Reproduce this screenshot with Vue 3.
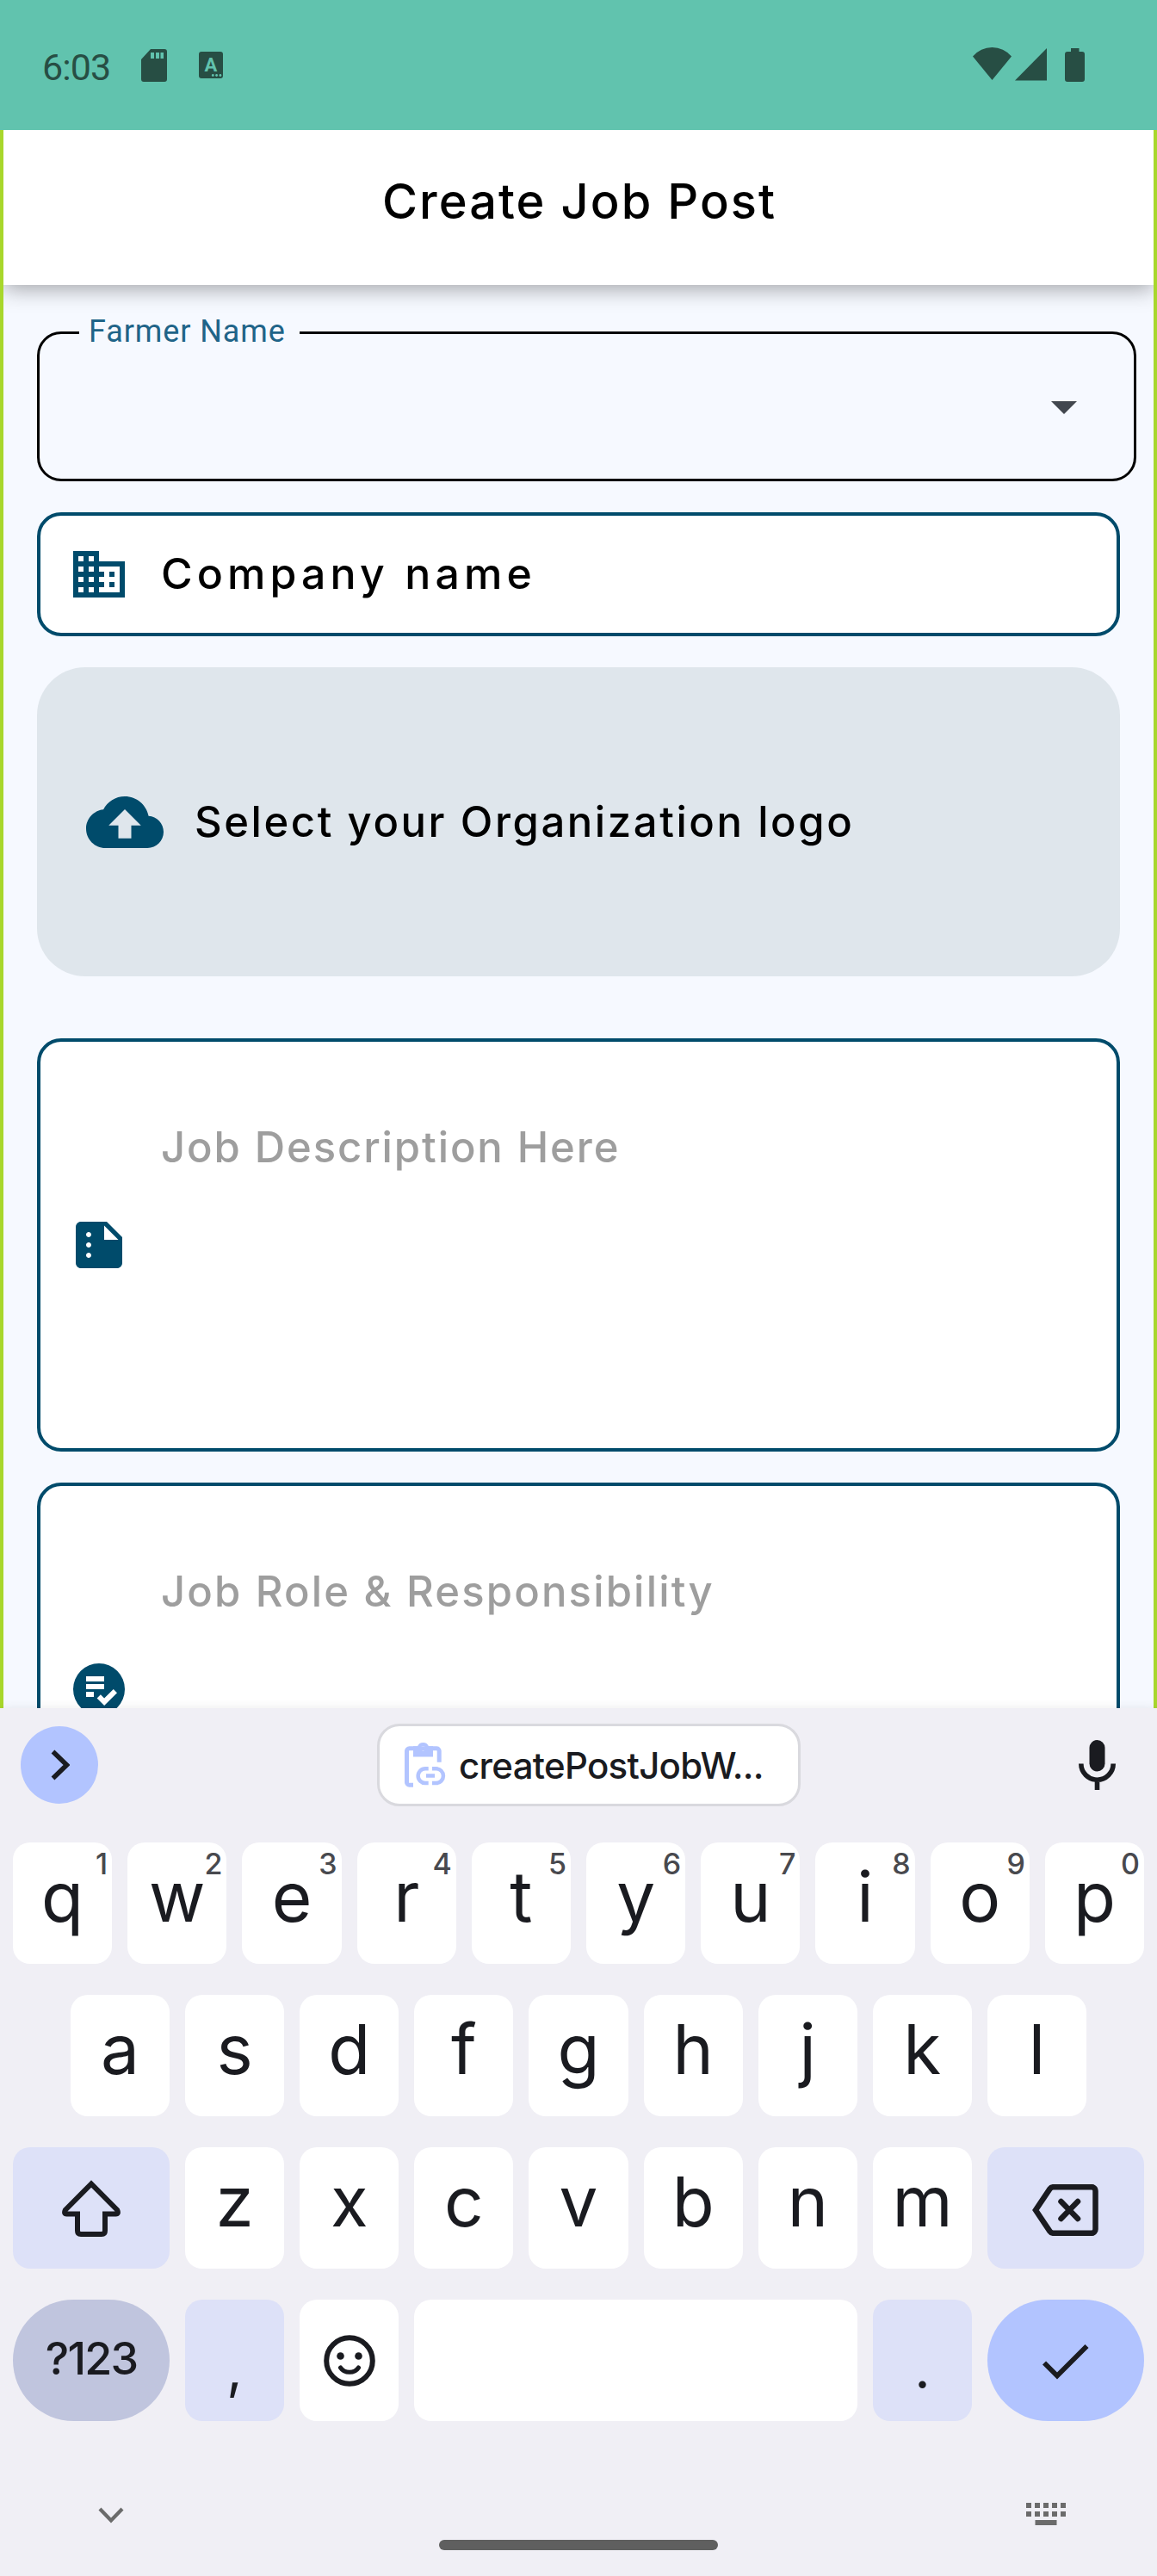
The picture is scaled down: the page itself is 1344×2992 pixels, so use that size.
<script setup>
const row1 = 'qwertyuiop'.split('').map((k, i) => ({ k, hint: (i + 1) % 10 }))
const row2 = 'asdfghjkl'.split('')
const row3 = 'zxcvbnm'.split('')
const dots = [0, 10, 20, 30, 40]
</script>

<template>
  <div class="screen">
    <header class="status">
      <span class="time">6:03</span>
      <svg class="sd" width="30" height="38" viewBox="0 0 30 38"><path fill-rule="evenodd" d="M11 0H27a3 3 0 0 1 3 3V35a3 3 0 0 1-3 3H3a3 3 0 0 1-3-3V12ZM11 4v7h4V4ZM17 4v7h4V4ZM22.500 4v7h3.500V4Z" /></svg>
      <svg class="lang" width="28" height="31" viewBox="0 0 28 31"><rect width="28" height="31" rx="3" /><g fill="#61c3ae"><text x="14" y="23" text-anchor="middle" class="glyph">A</text><circle cx="16.300" cy="27.500" r="1.400" /><circle cx="20.600" cy="27.500" r="1.400" /><circle cx="24.900" cy="27.500" r="1.400" /></g></svg>
      <span class="spacer"></span>
      <svg class="wifi" width="45" height="38" viewBox="0 0 45 38"><path d="M0 10.500A29.400 29.400 0 0 1 45 10.500L22.500 38Z" /></svg>
      <svg class="signal" width="37" height="38" viewBox="0 0 37 38"><path d="M37 0V37.500H0Z" /></svg>
      <svg class="battery" width="23" height="39" viewBox="0 0 23 39"><path d="M7 0h9.500v4H20a3 3 0 0 1 3 3V36a3 3 0 0 1-3 3H3a3 3 0 0 1-3-3V7a3 3 0 0 1 3-3H7Z" /></svg>
    </header>

    <main class="app">
      <div class="appbar"><h1>Create Job Post</h1></div>
      <div class="form">
        <div class="select">
          <span class="label"><span>Farmer Name</span></span>
          <svg width="30" height="15" viewBox="0 0 30 15"><path d="M0 0H30L15 15Z" fill="#42474e" /></svg>
        </div>

        <div class="field company">
          <svg class="icon" viewBox="0 0 24 24"><path d="M12 7V3H2v18h20V7H12zM6 19H4v-2h2v2zm0-4H4v-2h2v2zm0-4H4V9h2v2zm0-4H4V5h2v2zm4 12H8v-2h2v2zm0-4H8v-2h2v2zm0-4H8V9h2v2zm0-4H8V5h2v2zm10 12h-8v-2h2v-2h-2v-2h2v-2h-2V9h8v10zm-2-8h-2v2h2v-2zm0 4h-2v2h2v-2z" /></svg>
          <span class="text t-company">Company name</span>
        </div>

        <div class="upload">
          <svg width="90" height="90" viewBox="0 0 24 24"><path d="M19.350 10.040C18.670 6.590 15.640 4 12 4 9.110 4 6.600 5.640 5.350 8.040 2.340 8.360 0 10.910 0 14c0 3.310 2.690 6 6 6h13c2.760 0 5-2.240 5-5 0-2.640-2.050-4.780-4.650-4.960zM14 13v4h-4v-4H7l5-5 5 5h-3z" /></svg>
          <span class="text t-upload">Select your Organization logo</span>
        </div>

        <div class="field area">
          <svg class="icon" viewBox="0 0 24 24"><path fill-rule="evenodd" d="M15 3H5c-1.100 0-1.990.9-1.990 2L3 19c0 1.100.89 2 1.990 2H19c1.100 0 2-.9 2-2V9l-6-6zM8 17c-.55 0-1-.45-1-1s.45-1 1-1 1 .45 1 1-.45 1-1 1zm0-4c-.55 0-1-.45-1-1s.45-1 1-1 1 .45 1 1-.45 1-1 1zm0-4c-.55 0-1-.45-1-1s.45-1 1-1 1 .45 1 1-.45 1-1 1zm6 1V4.500l5.500 5.500H14z" /></svg>
          <span class="text hint t-desc">Job Description Here</span>
        </div>

        <div class="field area role">
          <svg class="icon" viewBox="0 0 24 24"><path fill-rule="evenodd" d="M12 2a10 10 0 1 0 0 20 10 10 0 0 0 0-20ZM7 7h7v2H7ZM7 10h7v2H7ZM10 15H7v-2h3ZM14.050 18.360l-2.830-2.830 1.410-1.410 1.410 1.410L17.590 12 19 13.410Z" /></svg>
          <span class="text hint t-role">Job Role &amp; Responsibility</span>
        </div>
      </div>
    </main>

    <section class="keyboard">
      <div class="toolbar">
        <div class="expand"><svg width="22" height="36" viewBox="0 0 22 36"><path d="M2.500 2.500L18.500 18L2.500 33.500" fill="none" stroke="#1a1b20" stroke-width="5.500" /></svg></div>
        <div class="chip">
          <svg width="48" height="54" viewBox="0 0 48 54" fill="none" stroke="#b2c4ff" stroke-width="5">
            <path d="M10 50.200H5.500a3 3 0 0 1-3-3V10.800a3 3 0 0 1 3-3H37.200a3 3 0 0 1 3 3V23.700" />
            <path fill="#b2c4ff" stroke="none" fill-rule="evenodd" d="M10 5.300h5a7 7 0 0 1 13 0h5V17.500H10ZM21.500 5a2.700 2.700 0 1 0 0 5.400 2.700 2.700 0 0 0 0-5.400Z" />
            <path d="M27.700 31.300H24a8.350 8.350 0 0 0 0 16.700h3.700M32 31.300h4.600a8.350 8.350 0 0 1 0 16.700H32M25 39.400h10" stroke-width="4.500" />
          </svg>
          <span class="t-chip">createPostJobW...</span>
        </div>
        <svg class="mic" width="43" height="58" viewBox="0 0 43 58"><rect x="12.500" y="0" width="18" height="36.500" rx="9" fill="#1a1b20" /><path d="M2.800 27.500a18.700 18.700 0 0 0 37.400 0M21.500 46v12" fill="none" stroke="#1a1b20" stroke-width="5.600" /></svg>
      </div>

      <div class="keys">
        <div class="row">
          <div v-for="key in row1" :key="key.k" class="key">{{ key.k }}<small>{{ key.hint }}</small></div>
        </div>
        <div class="row inset">
          <div v-for="k in row2" :key="k" class="key">{{ k }}</div>
        </div>
        <div class="row">
          <div class="key wide tint"><svg width="68" height="66" viewBox="0 0 68 66"><path d="M34 4.500L3.800 35q-2 4.500 1.700 4.500H18V59q0 4 4 4H46q4 0 4-4V39.500H62.500q3.700 0 1.700-4.500Z" fill="none" stroke="#1a1b20" stroke-width="6" stroke-linejoin="miter" /></svg></div>
          <div v-for="k in row3" :key="k" class="key">{{ k }}</div>
          <div class="key wide tint erase"><svg width="78" height="60" viewBox="0 0 78 60" fill="none" stroke="#1a1b20" stroke-width="6.500"><path d="M24.500 3.200H69a4.500 4.500 0 0 1 4.500 4.500V52.300a4.500 4.500 0 0 1-4.500 4.500H24.500a5 5 0 0 1-4-2.200L4 30L20.500 5.400a5 5 0 0 1 4-2.200Z" /><path d="M33.500 20L53 40M53 20L33.500 40" stroke-linecap="round" /></svg></div>
        </div>
        <div class="row">
          <div class="key wide symbols"><span>?123</span></div>
          <div class="key tint punct">,</div>
          <div class="key"><svg width="60" height="60" viewBox="0 0 60 60"><circle cx="30" cy="30" r="26.800" fill="none" stroke="#1a1b20" stroke-width="6" /><circle cx="19.500" cy="24.500" r="4.300" fill="#1a1b20" /><circle cx="40.500" cy="24.500" r="4.300" fill="#1a1b20" /><path d="M19.500 38q3.500 5.300 10.500 5.300T40.500 38" fill="none" stroke="#1a1b20" stroke-width="5" stroke-linecap="round" /></svg></div>
          <div class="key space"></div>
          <div class="key tint punct">.</div>
          <div class="key wide enter"><svg width="54" height="42" viewBox="0 0 54 42"><path d="M2 22.500L17 37.500L51.500 3" fill="none" stroke="#1a1b20" stroke-width="5.800" /></svg></div>
        </div>
      </div>

      <div class="nav">
        <svg class="down" width="30" height="19" viewBox="0 0 30 19"><path d="M2 2L15 15.500L28 2" fill="none" stroke="#6b6b6b" stroke-width="4.200" /></svg>
        <span class="pill"></span>
        <svg class="kbd" width="46" height="27" viewBox="0 0 46 27" fill="#6b6b6b"><template v-for="x in dots" :key="x"><rect :x="x" y="0" width="6" height="6" /><rect :x="x" y="10" width="6" height="6" /></template><rect x="10.500" y="20" width="25" height="6" /></svg>
      </div>
    </section>
  </div>
</template>

<style>
body { margin: 0; }
</style>

<style scoped>
.screen { width: 1344px; height: 2992px; display: flex; flex-direction: column; overflow: hidden; background: #f6f9ff; font-family: Inter, sans-serif; box-sizing: border-box; }
.screen *, .screen *::before { box-sizing: border-box; }
svg { display: block; flex: none; }
.status { height: 151px; flex: none; background: #61c3ae; fill: #274e44; color: #274e44; display: flex; align-items: flex-start; padding: 55px 84px 0 49px; }
.time { font: 400 43px/46px Roboto, sans-serif; letter-spacing: -.9px; width: 115px; white-space: nowrap; }
.sd { margin-top: 2px; }
.lang { margin: 5px 0 0 37px; }
.glyph { font: 700 22px Roboto, sans-serif; }
.spacer { flex: 1; }
.signal { margin: 1px 21px 0 4px; }
.battery { margin-top: 1px; }
.app { flex: none; height: 1833px; border: solid #a8d72c; border-width: 0 4px; overflow: hidden; }
.appbar { height: 180px; background: #fff; display: flex; align-items: center; justify-content: center; padding-bottom: 14px; box-shadow: 0 4px 24px rgba(0, 0, 0, .36); }
h1 { margin: 0; font-size: 56px; font-weight: 500; line-height: 70px; letter-spacing: 2.050px; padding-left: 2px; white-space: nowrap; color: #000; }
.form { padding: 54px 39px 0; display: flex; flex-direction: column; }
.select { position: relative; height: 174px; margin-right: -19px; border: 3px solid #000; border-radius: 28px; display: flex; align-items: center; justify-content: flex-end; padding: 2px 66px 0 0; }
.label { position: absolute; left: 46px; top: -24px; width: 256px; padding-left: 11px; background: #f6f9ff; font: 400 36px/42px Roboto, sans-serif; letter-spacing: .9px; color: #1f6488; white-space: nowrap; }
.field { border: 4px solid #004b6b; border-radius: 28px; background: #fff; display: flex; align-items: center; padding-left: 32px; }
.icon { width: 72px; height: 72px; fill: #004b6b; }
.text { font-size: 49px; font-weight: 500; line-height: 60px; color: #000; white-space: nowrap; }
.field .text { margin-left: 36px; }
.t-company { font-size: 50px; letter-spacing: 5.100px; }
.t-upload { letter-spacing: 2.570px; }
.t-desc { letter-spacing: 1.900px; }
.t-role { letter-spacing: 2.170px; }
.company { height: 144px; margin-top: 36px; }
.company .text { margin-top: -3px; }
.upload { height: 359px; margin: 36px 0 72px; background: #dfe6ec; border-radius: 56px; display: flex; align-items: center; padding-left: 57px; gap: 36px; fill: #004b6b; }
.area { height: 480px; margin-bottom: 36px; }
.area .text { align-self: flex-start; margin-top: 93px; }
.text.hint { color: #9e9e9e; }
.keyboard { flex: 1; position: relative; background: #f0eff5; box-shadow: 0 0 12px rgba(0, 0, 0, .08); color: #1a1b20; display: flex; flex-direction: column; }
.toolbar { height: 156px; display: flex; align-items: center; padding: 0 48px 24px 24px; }
.expand { width: 90px; height: 90px; border-radius: 50%; background: #b2c4ff; display: flex; align-items: center; justify-content: center; padding-left: 2px; }
.chip { width: 492px; height: 96px; margin-left: 324px; border: 3px solid #d9d9de; border-radius: 26px; background: #fff; display: flex; align-items: center; padding-left: 29px; gap: 15px; font-size: 42px; font-weight: 500; letter-spacing: -.7px; white-space: nowrap; }
.mic { margin-left: auto; }
.keys { padding: 0 15px; display: flex; flex-direction: column; gap: 36px; }
.row { display: flex; gap: 18px; height: 141px; }
.row.inset { padding: 0 67px; }
.key { position: relative; flex: 1 1 115px; min-width: 0; background: #fff; border-radius: 20px; font-size: 80px; line-height: 126px; text-align: center; }
.key svg { margin: 41px auto 0; }
.key small { position: absolute; right: 5px; top: 11px; font-size: 34px; line-height: 28px; font-weight: 500; color: #48494e; }
.key.wide { flex: 0 0 182px; display: flex; align-items: center; justify-content: center; }
.key.wide svg { margin: 0; }
.key.erase svg { margin: 5px 0 0; }
.key.tint { background: #dde1f8; }
.key.punct { font-size: 64px; line-height: 160px; }
.key.symbols { background: #c0c5de; border-radius: 71px; font-size: 52px; font-weight: 500; letter-spacing: -1.800px; }
.key.symbols span { line-height: 60px; margin-top: -3px; }
.key.enter { background: #b2c4ff; border-radius: 71px; }
.key.enter svg { margin-top: 2px; }
.key.space { flex: 0 0 515px; }
.nav { flex: 1; display: flex; align-items: flex-start; padding: 95px 106px 0 114px; }
.down { margin-top: 5px; }
.pill { width: 324px; height: 12px; border-radius: 6px; background: #5f5f5f; margin: 43px 0 0 366px; }
.kbd { margin-left: auto; }
</style>
